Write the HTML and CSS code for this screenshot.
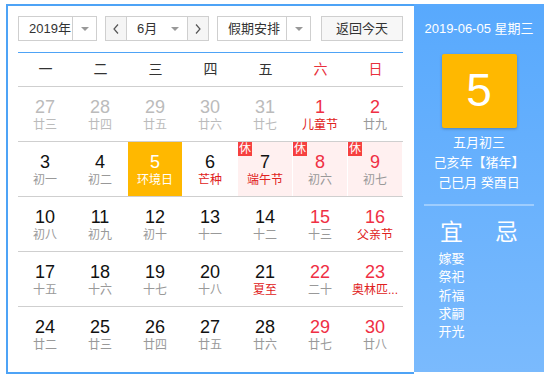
FILE: index.html
```html
<!DOCTYPE html>
<html lang="zh-CN">
<head>
<meta charset="utf-8">
<title>万年历</title>
<link rel="stylesheet" href="styles.css">
</head>
<body>
<div class="cal">
  <div class="main">
    <div class="toolbar">
      <div class="sel sel-year"><span class="sel-text">2019年</span><span class="sel-arrow"><i class="tri"></i></span></div>
      <div class="sel sel-month">
        <span class="nav"><svg width="6" height="10" viewBox="0 0 6 10"><polyline points="5,0.5 1,5 5,9.5" fill="none" stroke="#555" stroke-width="1.2"/></svg></span>
        <span class="sel-mid"><span>6月</span><i class="tri"></i></span>
        <span class="nav"><svg width="6" height="10" viewBox="0 0 6 10"><polyline points="1,0.5 5,5 1,9.5" fill="none" stroke="#555" stroke-width="1.2"/></svg></span>
      </div>
      <div class="sel sel-hol"><span class="sel-text">假期安排</span><span class="sel-arrow"><i class="tri"></i></span></div>
      <button class="today-btn">返回今天</button>
    </div>
    <div class="table">
      <div class="week">
        <span>一</span><span>二</span><span>三</span><span>四</span><span>五</span><span class="red">六</span><span class="red">日</span>
      </div>
      <div class="row">
        <div class="day other"><span class="num">27</span><span class="lunar">廿三</span></div>
        <div class="day other"><span class="num">28</span><span class="lunar">廿四</span></div>
        <div class="day other"><span class="num">29</span><span class="lunar">廿五</span></div>
        <div class="day other"><span class="num">30</span><span class="lunar">廿六</span></div>
        <div class="day other"><span class="num">31</span><span class="lunar">廿七</span></div>
        <div class="day wkd fest"><span class="num">1</span><span class="lunar">儿童节</span></div>
        <div class="day wkd"><span class="num">2</span><span class="lunar">廿九</span></div>
      </div>
      <div class="row">
        <div class="day"><span class="num">3</span><span class="lunar">初一</span></div>
        <div class="day"><span class="num">4</span><span class="lunar">初二</span></div>
        <div class="day today"><span class="num">5</span><span class="lunar">环境日</span></div>
        <div class="day fest"><span class="num">6</span><span class="lunar">芒种</span></div>
        <div class="day rest fest"><span class="badge">休</span><span class="num">7</span><span class="lunar">端午节</span></div>
        <div class="day rest wkd"><span class="badge">休</span><span class="num">8</span><span class="lunar">初六</span></div>
        <div class="day rest wkd"><span class="badge">休</span><span class="num">9</span><span class="lunar">初七</span></div>
      </div>
      <div class="row">
        <div class="day"><span class="num">10</span><span class="lunar">初八</span></div>
        <div class="day"><span class="num">11</span><span class="lunar">初九</span></div>
        <div class="day"><span class="num">12</span><span class="lunar">初十</span></div>
        <div class="day"><span class="num">13</span><span class="lunar">十一</span></div>
        <div class="day"><span class="num">14</span><span class="lunar">十二</span></div>
        <div class="day wkd"><span class="num">15</span><span class="lunar">十三</span></div>
        <div class="day wkd fest"><span class="num">16</span><span class="lunar">父亲节</span></div>
      </div>
      <div class="row">
        <div class="day"><span class="num">17</span><span class="lunar">十五</span></div>
        <div class="day"><span class="num">18</span><span class="lunar">十六</span></div>
        <div class="day"><span class="num">19</span><span class="lunar">十七</span></div>
        <div class="day"><span class="num">20</span><span class="lunar">十八</span></div>
        <div class="day fest"><span class="num">21</span><span class="lunar">夏至</span></div>
        <div class="day wkd"><span class="num">22</span><span class="lunar">二十</span></div>
        <div class="day wkd fest"><span class="num">23</span><span class="lunar">奥林匹...</span></div>
      </div>
      <div class="row last">
        <div class="day"><span class="num">24</span><span class="lunar">廿二</span></div>
        <div class="day"><span class="num">25</span><span class="lunar">廿三</span></div>
        <div class="day"><span class="num">26</span><span class="lunar">廿四</span></div>
        <div class="day"><span class="num">27</span><span class="lunar">廿五</span></div>
        <div class="day"><span class="num">28</span><span class="lunar">廿六</span></div>
        <div class="day wkd"><span class="num">29</span><span class="lunar">廿七</span></div>
        <div class="day wkd"><span class="num">30</span><span class="lunar">廿八</span></div>
      </div>
    </div>
  </div>
  <div class="side">
    <div class="side-date">2019-06-05 星期三</div>
    <div class="big-day">5</div>
    <div class="side-lunar">
      <div>五月初三</div>
      <div>己亥年【猪年】</div>
      <div>己巳月 癸酉日</div>
    </div>
    <div class="side-sep"></div>
    <div class="yiji">
      <div class="yj-col">
        <div class="yj-title">宜</div>
        <div class="yj-list">
          <div>嫁娶</div><div>祭祀</div><div>祈福</div><div>求嗣</div><div>开光</div>
        </div>
      </div>
      <div class="yj-col">
        <div class="yj-title">忌</div>
      </div>
    </div>
  </div>
</div>
</body>
</html>
```

FILE: styles.css
```css
* { box-sizing: border-box; }
html, body { margin: 0; padding: 0; background: #fff; }
body {
  font-family: "Liberation Sans", "Noto Sans CJK SC", sans-serif;
  color: #333;
}
.cal {
  display: flex;
  align-items: flex-start;
  margin: 4px 0 0 6px;
}
.main {
  width: 408px;
  height: 370px;
  border: 2px solid #4ea3f6;
  border-right: none;
  padding: 10px 11px 11px 10px;
  background: #fff;
}
.toolbar {
  display: flex;
  height: 25px;
  margin-bottom: 11px;
}
.sel {
  display: flex;
  height: 25px;
  border: 1px solid #cfcfcf;
  background: #fff;
  font-size: 13px;
  line-height: 23px;
  color: #333;
}
.sel-year { width: 79px; }
.sel-hol { width: 94px; margin-left: 8px; }
.sel-month { width: 104px; margin-left: 8px; }
.sel-text { flex: 1; padding-left: 10px; }
.sel-arrow {
  width: 24px;
  border-left: 1px solid #cfcfcf;
  display: flex;
  align-items: center;
  justify-content: center;
}
.tri {
  display: block;
  width: 0;
  height: 0;
  border-left: 4px solid transparent;
  border-right: 4px solid transparent;
  border-top: 4px solid #999;
}
.nav {
  width: 21px;
  background: #f5f5f5;
  display: flex;
  align-items: center;
  justify-content: center;
}
.nav:first-child { border-right: 1px solid #cfcfcf; }
.nav:last-child { border-left: 1px solid #cfcfcf; }
.sel-mid {
  flex: 1;
  display: flex;
  align-items: center;
  justify-content: space-between;
  padding: 0 8px 0 10px;
}
.today-btn {
  margin-left: 10px;
  width: 82px;
  height: 25px;
  border: 1px solid #cfcfcf;
  background: #f7f7f7;
  font-family: "Liberation Sans", "Noto Sans CJK SC", sans-serif;
  font-size: 13px;
  color: #333;
  padding: 0;
  line-height: 23px;
}
.table {
  width: 385px;
  border-top: 1px solid #4ea3f6;
}
.week {
  display: grid;
  grid-template-columns: repeat(7, 55px);
  height: 34px;
  border-bottom: 1px solid #cfcfcf;
  font-size: 14px;
  line-height: 33px;
  text-align: center;
  color: #333;
}
.week .red { color: #e8303c; }
.row {
  display: grid;
  grid-template-columns: repeat(7, 54px);
  column-gap: 1px;
  height: 55px;
  border-bottom: 1px solid #cfcfcf;
}
.row.last { border-bottom: none; height: 54px; }
.day {
  position: relative;
  height: 54px;
  padding-top: 10px;
  text-align: center;
  display: flex;
  flex-direction: column;
  align-items: center;
}
.num {
  font-size: 18px;
  line-height: 20px;
  color: #111;
}
.lunar {
  font-size: 12px;
  line-height: 17px;
  color: #999;
  white-space: nowrap;
}
.day.other .num { color: #bbb; }
.day.other .lunar { color: #bbb; }
.day.wkd .num { color: #ef2f44; }
.day.fest .lunar { color: #e02020; }
.day.today { background: #ffb800; }
.day.today .num, .day.today .lunar { color: #fff; }
.day.rest { background: #fff0f0; }
.badge {
  position: absolute;
  left: 0;
  top: 0;
  width: 14px;
  height: 14px;
  background: #f6403f;
  color: #fff;
  font-size: 12px;
  line-height: 14px;
  text-align: center;
}
.side {
  width: 130px;
  height: 368px;
  background: linear-gradient(#58a9fd, #7abafd);
  color: #fff;
  padding: 15px 10px 0;
  display: flex;
  flex-direction: column;
  align-items: center;
}
.side-date {
  font-size: 13px;
  line-height: 20px;
  white-space: nowrap;
}
.big-day {
  margin-top: 15px;
  width: 75px;
  height: 74px;
  background: #ffb800;
  border-radius: 2px;
  box-shadow: 0 1px 3px rgba(0,0,0,0.25);
  font-size: 46px;
  line-height: 72px;
  text-align: center;
  color: #fff;
}
.side-lunar {
  margin-top: 5px;
  font-size: 13px;
  line-height: 20px;
  text-align: center;
}
.side-sep {
  margin-top: 11px;
  width: 110px;
  height: 2px;
  background: rgba(255,255,255,0.35);
}
.yiji {
  margin-top: 11px;
  width: 110px;
  display: flex;
}
.yj-col {
  width: 55px;
  display: flex;
  flex-direction: column;
  align-items: center;
}
.yj-title {
  font-size: 23px;
  line-height: 30px;
}
.yj-list {
  margin-top: 3px;
  font-size: 13px;
  line-height: 18.3px;
  text-align: center;
}
```
